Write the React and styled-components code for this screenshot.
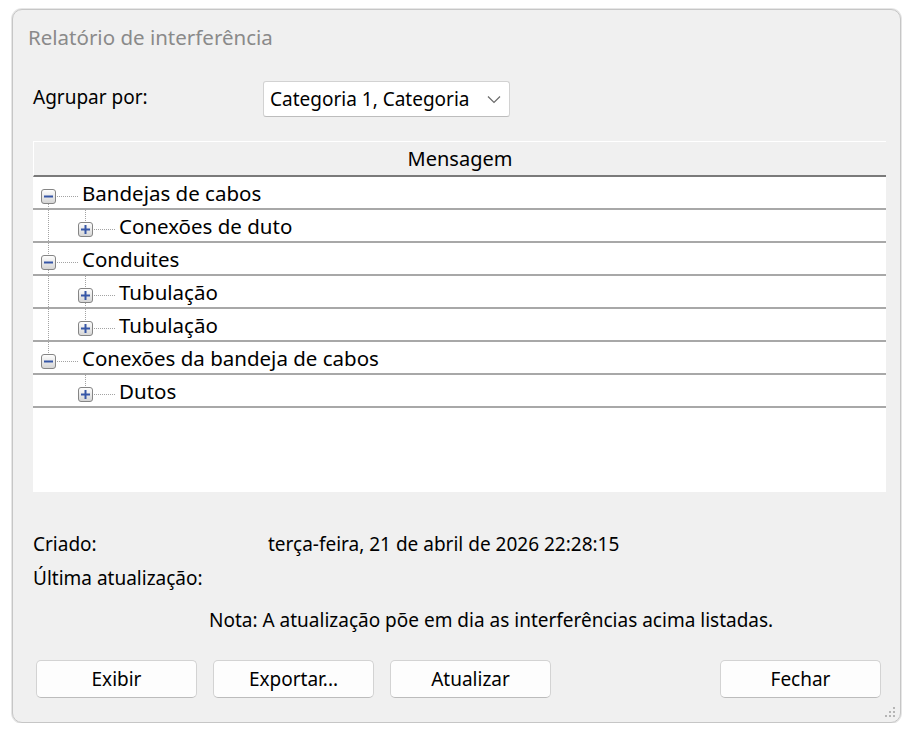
import styled, { createGlobalStyle } from "styled-components";

const Global = createGlobalStyle`
  body {
    margin: 0;
    background: #ffffff;
    font-family: "Noto Sans", "Liberation Sans", sans-serif;
    color: #000000;
  }
`

const Dialog = styled.div`
  position: relative;
  box-sizing: border-box;
  margin: 9px 0 0 12px;
  width: 889px;
  height: 714px;
  border: 1px solid #c6c6c6;
  box-shadow: 0 0 0 1px #e6e6e6;
  border-radius: 10px;
  background: #f0f0f0;
  padding: 0 14px 0 20px;
  display: flex;
  flex-direction: column;
`

const Title = styled.div`
  height: 54px;
  line-height: 54px;
  padding-left: 15px;
  margin-left: -20px;
  font-size: 20.5px;
  color: #8a8a8a;
`

const GroupRow = styled.div`
  margin-top: 17px;
  height: 36px;
  display: flex;
  align-items: center;
  font-size: 19px;
`

const FieldLabel = styled.span`
  width: ${p => p.$w}px;
  flex-shrink: 0;
  padding-bottom: ${p => (p.$lift ? 4 : 0)}px;
`

const Select = styled.div`
  box-sizing: border-box;
  width: 247px;
  height: 36px;
  background: #ffffff;
  border: 1px solid #d2d2d2;
  border-bottom-color: #bdbdbd;
  border-radius: 3px;
  display: flex;
  align-items: center;
  justify-content: space-between;
  padding: 0 8px 0 6px;
  font-size: 19px;
`

const Table = styled.div`
  margin-top: 24px;
  height: 351px;
  background: #ffffff;
  display: flex;
  flex-direction: column;
`

const Header = styled.div`
  box-sizing: border-box;
  height: 36px;
  background: #f0f0f0;
  border-top: 1px solid #ffffff;
  border-left: 1px solid #ffffff;
  border-bottom: 2px solid #7a7a7a;
  display: flex;
  align-items: center;
  justify-content: center;
  font-size: 20px;
`

const Row = styled.div`
  box-sizing: border-box;
  height: 33px;
  border-bottom: 2px solid #a8a8a8;
  display: flex;
  align-items: stretch;
`

const Label = styled.span`
  font-size: 20.5px;
  line-height: 31px;
  padding-top: 1px;
  white-space: nowrap;
`

const Meta = styled.div`
  margin-top: 35px;
  font-size: 19px;
`

const MetaLine = styled.div`
  height: 34px;
  display: flex;
  align-items: center;
`

const Note = styled.div`
  margin-top: 8px;
  height: 34px;
  line-height: 34px;
  padding-left: 176px;
  font-size: 19px;
`

const Buttons = styled.div`
  margin-top: 23px;
  padding: 0 5px 0 3px;
  display: flex;
  gap: 16px;
`

const Button = styled.button`
  box-sizing: border-box;
  width: 161px;
  height: 38px;
  margin-left: ${p => (p.$push ? "auto" : "0")};
  background: #fdfdfd;
  border: 1px solid #d3d3d3;
  border-bottom-color: #bcbcbc;
  border-radius: 5px;
  font-family: inherit;
  font-size: 19px;
  color: #000;
  padding: 0;
`

const Grip = styled.svg`
  position: absolute;
  right: 3px;
  bottom: 3px;
`

const DOT = "1 1"
const LINE = "#a3a3a3"

// one indentation column, carries the parent's vertical guide
const Indent = ({ through }) => (
  <svg width="37" height="31" style={{ flexShrink: 0 }}>
    {through && <line x1="15.5" y1="0" x2="15.5" y2="31" stroke={LINE} strokeDasharray={DOT} />}
  </svg>
)

// expander box with its connector lines
const Node = ({ open, up, down }) => (
  <svg width="49" height="31" style={{ flexShrink: 0 }}>
    <defs>
      <linearGradient id="bx" x1="0" y1="0" x2="0" y2="1">
        <stop offset="0" stopColor="#ffffff" />
        <stop offset="1" stopColor="#d4d4d4" />
      </linearGradient>
    </defs>
    {up && <line x1="15.5" y1="0" x2="15.5" y2="12" stroke={LINE} strokeDasharray={DOT} />}
    {down && <line x1="15.5" y1="27" x2="15.5" y2="31" stroke={LINE} strokeDasharray={DOT} />}
    <line x1="24" y1="19.5" x2="45" y2="19.5" stroke={LINE} strokeDasharray={DOT} />
    <rect x="8.5" y="12.5" width="14" height="14" rx="2.5" fill="url(#bx)" stroke="#858585" />
    <line x1="11" y1="19.5" x2="20" y2="19.5" stroke="#3656a6" strokeWidth="2" />
    {!open && <line x1="15.5" y1="15" x2="15.5" y2="24" stroke="#3656a6" strokeWidth="2" />}
  </svg>
)

const rows = [
  { label: "Bandejas de cabos", level: 0, open: true, up: false, down: true },
  { label: "Conexões de duto", level: 1, up: true, down: false, through: true },
  { label: "Conduites", level: 0, open: true, up: true, down: true },
  { label: "Tubulação", level: 1, up: true, down: true, through: true },
  { label: "Tubulação", level: 1, up: true, down: false, through: true },
  { label: "Conexões da bandeja de cabos", level: 0, open: true, up: true, down: false },
  { label: "Dutos", level: 1, up: true, down: false, through: false },
]

export default function App() {
  return (
    <>
      <Global />
      <Dialog>
        <Title>Relatório de interferência</Title>
        <GroupRow>
          <FieldLabel $w={230} $lift>Agrupar por:</FieldLabel>
          <Select>
            <span>Categoria 1, Categoria</span>
            <svg width="14" height="9" viewBox="0 0 14 9">
              <path d="M1 1.5 L7 7.5 L13 1.5" fill="none" stroke="#6a6a6a" strokeWidth="1.2" />
            </svg>
          </Select>
        </GroupRow>

        <Table>
          <Header>Mensagem</Header>
          {rows.map((r, i) => (
            <Row key={i}>
              {r.level === 1 && <Indent through={r.through} />}
              <Node open={r.open} up={r.up} down={r.down} />
              <Label>{r.label}</Label>
            </Row>
          ))}
        </Table>

        <Meta>
          <MetaLine>
            <FieldLabel $w={235}>Criado:</FieldLabel>
            <span>terça-feira, 21 de abril de 2026 22:28:15</span>
          </MetaLine>
          <MetaLine>
            <FieldLabel $w={235}>Última atualização:</FieldLabel>
          </MetaLine>
        </Meta>
        <Note>Nota: A atualização põe em dia as interferências acima listadas.</Note>

        <Buttons>
          <Button>Exibir</Button>
          <Button>Exportar...</Button>
          <Button>Atualizar</Button>
          <Button $push>Fechar</Button>
        </Buttons>

        <Grip width="14" height="14" viewBox="0 0 14 14">
          {[[11, 3], [7, 7], [11, 7], [3, 11], [7, 11], [11, 11]].map(([x, y], i) => (
            <rect key={i} x={x - 1} y={y - 1} width="2" height="2" fill="#b5b5b5" />
          ))}
        </Grip>
      </Dialog>
    </>
  )
}
